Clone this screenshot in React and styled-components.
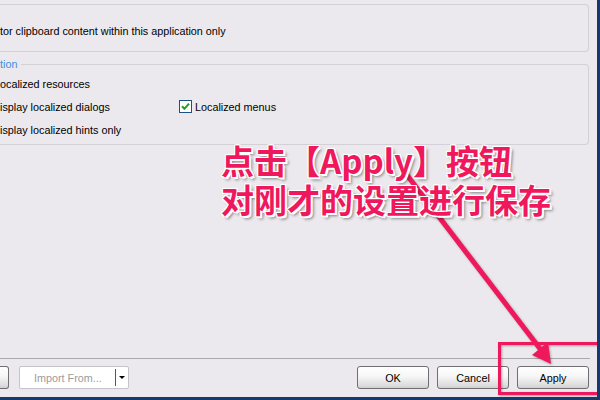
import React from "react";
import styled, { createGlobalStyle } from "styled-components";

const GlobalStyle = createGlobalStyle`
  html, body { margin: 0; padding: 0; background: #ebe9ed; }
  * { box-sizing: border-box; }
`;

const Window = styled.div`
  position: relative;
  width: 600px;
  height: 400px;
  overflow: hidden;
  background: #ebe9ed;
  border-right: 3px solid #163a6e;
  border-bottom: 3px solid #163a6e;
  display: flex;
  flex-direction: column;
  font-family: "Liberation Sans", Arial, sans-serif;
  font-size: 10.8px;
  color: #000;
`;

const Main = styled.div`
  flex: 1;
  padding: 4px 8px 0 0;
  display: flex;
  flex-direction: column;
  gap: 12px;
`;

const Group = styled.div`
  position: relative;
  height: ${(p) => p.$h}px;
  border: 1px solid #d3d1d7;
  border-left: none;
  border-radius: 0 4px 4px 0;
  padding: ${(p) => p.$pad};
`;

const Legend = styled.span`
  position: absolute;
  left: 0;
  top: -8px;
  padding-right: 4px;
  background: #ebe9ed;
  color: #3d8ee0;
  line-height: 14px;
`;

const Line = styled.div`
  line-height: 14px;
  white-space: nowrap;
`;

const Grid = styled.div`
  display: grid;
  grid-template-columns: 179px 1fr;
  grid-auto-rows: 23px;
  align-items: center;
`;

const CheckRow = styled.div`
  display: flex;
  align-items: center;
  gap: 3px;
  white-space: nowrap;
`;

const Box = styled.span`
  width: 13px;
  height: 13px;
  border: 1px solid #1c5180;
  background: #fff;
  display: inline-flex;
  align-items: center;
  justify-content: center;
`;

const Footer = styled.div`
  height: 39px;
  border-top: 1px solid #a9a8ad;
  margin-right: 7px;
  padding: 7px 1px 0 0;
  display: flex;
  align-items: flex-start;
`;

const LeftGroup = styled.div`
  display: flex;
  gap: 10px;
`;

const RightGroup = styled.div`
  margin-left: auto;
  display: flex;
  gap: 8px;
`;

const Button = styled.div`
  width: ${(p) => p.$w || 72}px;
  height: 23px;
  border: 1px solid #6f6f72;
  border-radius: 3px;
  background: linear-gradient(#ffffff 0%, #f6f6f6 45%, #dedede 85%, #cfcfcf 100%);
  display: flex;
  align-items: center;
  justify-content: center;
  color: #000;
  ${(p) => p.$partial && `border-left: none; border-radius: 0 3px 3px 0;`}
`;

const Combo = styled.div`
  width: 110px;
  height: 23px;
  background: #fff;
  border: 1px solid #c5c4cb;
  border-radius: 2px;
  display: flex;
  align-items: center;
`;

const ComboText = styled.span`
  width: 95px;
  padding-left: 14px;
  color: #9c9c9c;
  white-space: nowrap;
`;

const ComboSplit = styled.span`
  width: 1px;
  height: 17px;
  background: #555;
`;

const ComboArrow = styled.span`
  margin-left: 3px;
  width: 0;
  height: 0;
  border-left: 3px solid transparent;
  border-right: 3px solid transparent;
  border-top: 3px solid #000;
`;

const Overlay = styled.svg`
  position: absolute;
  left: 0;
  top: 0;
  width: 600px;
  height: 400px;
  pointer-events: none;
  filter: drop-shadow(1px 1px 1px rgba(0, 0, 0, 0.3));
`;

const Caption = styled.div`
  position: absolute;
  left: 221px;
  top: 141px;
  font-family: "Noto Sans CJK SC", "Noto Sans", sans-serif;
  font-weight: 700;
  font-size: 33px;
  color: #f0185c;
  white-space: nowrap;
  text-shadow:
    1px 0 0 #fff, -1px 0 0 #fff, 0 1px 0 #fff, 0 -1px 0 #fff,
    1px 1px 0 #fff, -1px -1px 0 #fff, 1px -1px 0 #fff, -1px 1px 0 #fff,
    2px 2px 0 #fff, 3px 3px 3px rgba(0, 0, 0, 0.45);
`;

const CaptionLine = styled.div`
  height: 39px;
  line-height: 39px;
`;

export default function App() {
  return (
    <>
      <GlobalStyle />
      <Window>
        <Main>
          <Group $h={48} $pad="19px 0 0 0">
            <Line>tor clipboard content within this application only</Line>
          </Group>
          <Group $h={81} $pad="7px 0 0 0">
            <Legend>tion</Legend>
            <Grid>
              <Line>ocalized resources</Line>
              <span />
              <Line>isplay localized dialogs</Line>
              <CheckRow>
                <Box>
                  <svg width="9" height="9" viewBox="0 0 9 9">
                    <path d="M1 4.2 L3.4 6.8 L8 1.6" fill="none" stroke="#21a121" strokeWidth="2" />
                  </svg>
                </Box>
                Localized menus
              </CheckRow>
              <Line>isplay localized hints only</Line>
              <span />
            </Grid>
          </Group>
        </Main>
        <Footer>
          <LeftGroup>
            <Button $partial $w={9} />
            <Combo>
              <ComboText>Import From...</ComboText>
              <ComboSplit />
              <ComboArrow />
            </Combo>
          </LeftGroup>
          <RightGroup>
            <Button>OK</Button>
            <Button>Cancel</Button>
            <Button>Apply</Button>
          </RightGroup>
        </Footer>
        <Overlay viewBox="0 0 600 400">
          <line x1="400" y1="166" x2="541" y2="350" stroke="#f0185c" strokeWidth="5" />
          <polygon points="551,364 532,355 548,342" fill="#f0185c" />
          <rect x="499.5" y="343.5" width="110" height="50" fill="none" stroke="#f0185c" strokeWidth="3" />
        </Overlay>
        <Caption>
          <CaptionLine>点击【Apply】按钮</CaptionLine>
          <CaptionLine>对刚才的设置进行保存</CaptionLine>
        </Caption>
      </Window>
    </>
  );
}
